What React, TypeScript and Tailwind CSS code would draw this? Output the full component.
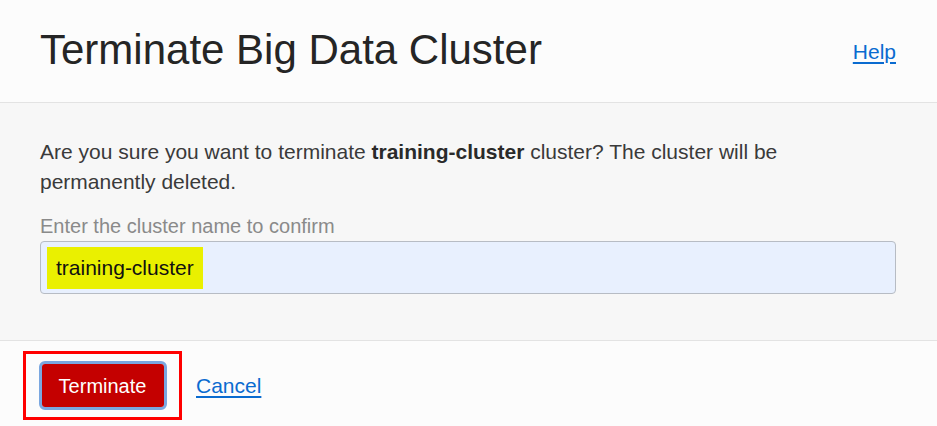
export default function App() {
  return (
    <div className="w-[937px] h-[426px] overflow-hidden bg-[#fcfcfc] flex flex-col" style={{ fontFamily: '"Liberation Sans", Arial, sans-serif' }}>
      <div className="h-[103px] shrink-0 flex items-center justify-between pl-[40px] pr-[41px] border-b border-[#e3e3e3] bg-[#fcfcfc]">
        <h1 className="text-[42px] leading-none text-[#252525] mt-[-2px]">Terminate Big Data Cluster</h1>
        <a href="#" className="text-[21px] text-[#0a6bd0] underline underline-offset-[3px] mt-[2px]">Help</a>
      </div>
      <div className="h-[238px] shrink-0 bg-[#f7f7f7] border-b border-[#e3e3e3] pl-[40px] pr-[41px]">
        <p className="mt-[34px] text-[21px] leading-[30px] text-[#3a3a3a]">
          Are you sure you want to terminate <b className="font-bold text-[#2a2a2a]">training-cluster</b> cluster? The cluster will be permanently deleted.
        </p>
        <div className="mt-[16px] text-[20px] leading-[26px] text-[#8a8a8a]">Enter the cluster name to confirm</div>
        <div className="mt-[2px] h-[53px] rounded-[4px] border border-[#b7bcc4] bg-[#e8f0fe] flex items-center pl-[6px]">
          <span className="bg-[#eaf000] h-[42px] px-[9px] flex items-center text-[21px] text-[#111]">training-cluster</span>
        </div>
      </div>
      <div className="flex items-center pl-[23px] pt-[10px]">
        <div className="border-[3px] border-[#ff0000] w-[159px] h-[69px] flex items-center justify-center">
          <div className="rounded-[6px] border-[3px] border-[#7aa7e0]">
            <button className="bg-[#c40000] text-white text-[20px] rounded-[3px] w-[122px] h-[43px] flex items-center justify-center">Terminate</button>
          </div>
        </div>
        <a href="#" className="ml-[14px] text-[21px] text-[#0a6bd0] underline underline-offset-[3px]">Cancel</a>
      </div>
    </div>
  );
}
